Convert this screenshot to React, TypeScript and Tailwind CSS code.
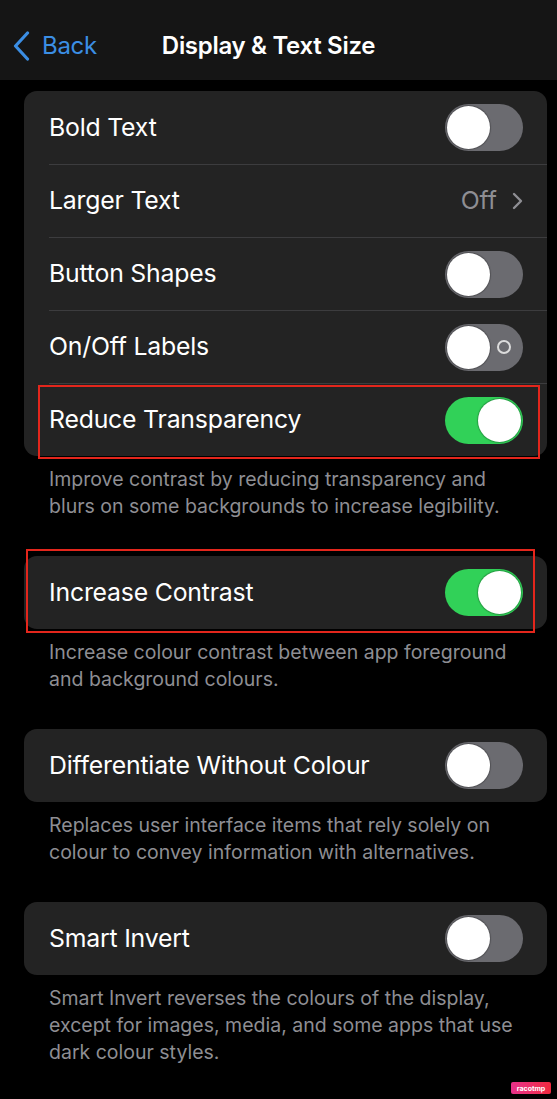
import React from "react";

type ToggleProps = { on?: boolean; labels?: boolean };

// iOS style switch; "labels" adds the little ring glyph shown when On/Off Labels is enabled
const Toggle = ({ on = false, labels = false }: ToggleProps) => (
  <div
    className={`relative flex h-[47px] w-[78px] shrink-0 items-center rounded-full p-[2px] ${
      on ? "justify-end bg-[#31d158]" : "justify-start bg-[#6b6b70]"
    }`}
  >
    {labels && !on && (
      <span className="absolute right-[12px] top-1/2 h-[14px] w-[14px] -translate-y-1/2 rounded-full border-2 border-[#dcdcdc]" />
    )}
    <span className="h-[43px] w-[43px] rounded-full bg-white shadow-[0_0_1px_1px_rgba(0,0,0,0.25)]" />
  </div>
);

type RowProps = {
  label: string;
  first?: boolean;
  children?: React.ReactNode;
  overlay?: React.ReactNode;
};

const Row = ({ label, first = false, children, overlay }: RowProps) => (
  <div className="relative h-[73px] pl-[25px]">
    <div
      className={`flex h-full items-center justify-between pr-[24px] ${
        first ? "" : "border-t border-[#3c3c3e]"
      }`}
    >
      <span className="text-[24.8px] tracking-[-0.2px] text-white">{label}</span>
      {children}
    </div>
    {overlay}
  </div>
);

const Card = ({ children }: { children: React.ReactNode }) => (
  <div className="relative rounded-[13px] bg-[#232323]">{children}</div>
);

const Footer = ({ lines }: { lines: string[] }) => (
  <p className="mt-[10px] pl-[25px] text-[19.5px] leading-[27px] text-[#8e8e93]">
    {lines.map((l, i) => (
      <React.Fragment key={i}>
        {l}
        {i < lines.length - 1 && <br />}
      </React.Fragment>
    ))}
  </p>
);

// red highlight frame drawn over a setting
const Highlight = ({ className }: { className: string }) => (
  <div className={`pointer-events-none absolute border-2 border-[#e3261c] ${className}`} />
);

export default function App() {
  return (
    <div
      className="relative h-[1099px] w-[557px] overflow-hidden bg-black"
      style={{ fontFamily: "Inter, 'Noto Sans', sans-serif" }}
    >
      {/* navigation bar */}
      <div className="relative flex h-[80px] items-center bg-[#151515] pt-[12px]">
        <div className="flex items-center pl-[13px] text-[#3b8ee4]">
          <svg width="17" height="30" viewBox="0 0 17 30" fill="none">
            <path d="M14.5 2 L2.5 15 L14.5 28" stroke="currentColor" strokeWidth="3.2" strokeLinecap="round" strokeLinejoin="round" />
          </svg>
          <span className="ml-[12px] text-[24px] tracking-[-0.3px]">Back</span>
        </div>
        <h1 className="absolute left-0 right-0 top-[12px] flex h-[68px] items-center justify-center pr-[20px] text-[24px] font-semibold tracking-[-0.3px] text-white">
          Display &amp; Text Size
        </h1>
      </div>

      <div className="pl-[24px] pr-[10px] pt-[11px]">
        <Card>
          <Row label="Bold Text" first>
            <Toggle />
          </Row>
          <Row label="Larger Text">
            <div className="flex items-center gap-[15px] text-[#8e8e93]">
              <span className="text-[24.8px]">Off</span>
              <svg width="11" height="18" viewBox="0 0 11 18" fill="none">
                <path d="M2 2 L9 9 L2 16" stroke="currentColor" strokeWidth="2.4" strokeLinecap="round" strokeLinejoin="round" />
              </svg>
            </div>
          </Row>
          <Row label="Button Shapes">
            <Toggle />
          </Row>
          <Row label="On/Off Labels">
            <Toggle labels />
          </Row>
          <Row
            label="Reduce Transparency"
            overlay={<Highlight className="left-[14px] right-[7px] top-[2px] bottom-[-3px]" />}
          >
            <Toggle on />
          </Row>
        </Card>
        <Footer
          lines={[
            "Improve contrast by reducing transparency and",
            "blurs on some backgrounds to increase legibility.",
          ]}
        />

        <div className="mt-[36px]">
          <Card>
            <Row label="Increase Contrast" first>
              <Toggle on />
            </Row>
            <Highlight className="left-[2px] right-[12px] top-[-7px] bottom-[-4px]" />
          </Card>
        </div>
        <Footer
          lines={[
            "Increase colour contrast between app foreground",
            "and background colours.",
          ]}
        />

        <div className="mt-[36px]">
          <Card>
            <Row label="Differentiate Without Colour" first>
              <Toggle />
            </Row>
          </Card>
        </div>
        <Footer
          lines={[
            "Replaces user interface items that rely solely on",
            "colour to convey information with alternatives.",
          ]}
        />

        <div className="mt-[36px]">
          <Card>
            <Row label="Smart Invert" first>
              <Toggle />
            </Row>
          </Card>
        </div>
        <Footer
          lines={[
            "Smart Invert reverses the colours of the display,",
            "except for images, media, and some apps that use",
            "dark colour styles.",
          ]}
        />
      </div>

      {/* corner badge */}
      <div className="absolute bottom-[5px] right-[6px] flex h-[12px] w-[40px] items-center justify-center rounded-[2px] bg-gradient-to-r from-[#e8318a] to-[#f0283c] text-[7px] font-bold leading-none text-white">
        racotmp
      </div>
    </div>
  );
}
